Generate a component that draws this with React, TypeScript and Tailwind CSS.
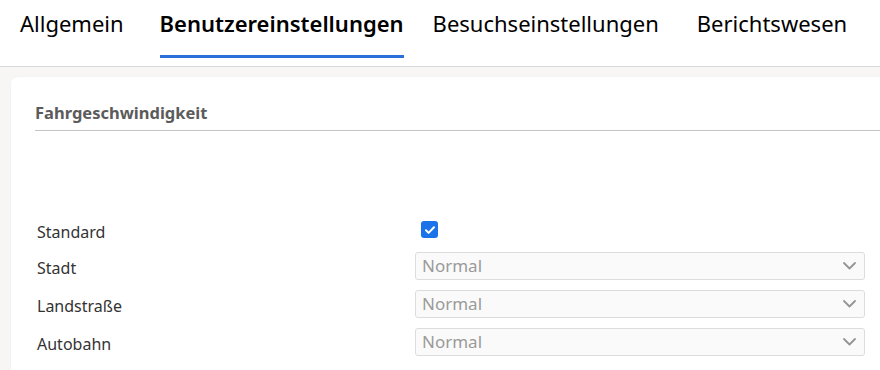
import React from "react";

const tabs = [
  { label: "Allgemein", cls: "" },
  { label: "Benutzereinstellungen", cls: "ml-[36px]" },
  { label: "Besuchseinstellungen", cls: "ml-[29px]" },
  { label: "Berichtswesen", cls: "ml-[38px]" },
];
const rows = ["Stadt", "Landstraße", "Autobahn"];

const Chevron = () => (
  <svg width="13" height="13" viewBox="0 0 13 13" fill="none" className="text-[#959595]">
    <path d="M1 4l5.5 5.5L12 4" stroke="currentColor" strokeWidth="1.8" strokeLinecap="round" strokeLinejoin="round" />
  </svg>
);

const App: React.FC = () => {
  return (
    <div className="w-[880px] h-[370px] overflow-hidden bg-[#f7f6f5] font-['Noto_Sans',sans-serif]">
      {/* Tabs */}
      <div className="h-[67px] bg-white border-b border-[#d9d9d9] flex pl-[20px]">
        {tabs.map((t, i) => (
          <div key={t.label} className={"flex flex-col " + t.cls}>
            <div
              className={
                "pt-[7px] h-[55px] text-[22px] text-black whitespace-nowrap " +
                (i === 1 ? "font-semibold" : "")
              }
            >
              {t.label}
            </div>
            <div className={"h-[3px] " + (i === 1 ? "bg-[#2a6fdb]" : "")} />
          </div>
        ))}
      </div>

      {/* Card */}
      <div className="ml-[11px] mt-[10px] bg-white rounded-tl-[6px] h-[300px] pl-[24px] shadow-[0_0_2px_rgba(0,0,0,0.05)]">
        <div className="pt-[24px] pb-[4px] border-b border-[#c4c4c4] text-[16.5px] font-bold text-[#5b5b5b]">
          Fahrgeschwindigkeit
        </div>

        <div className="mt-[89px] flex flex-col text-[16px] text-[#333]">
          <div className="flex items-center h-[24px]">
            <span className="w-[386px] pl-[2px]">Standard</span>
            <span className="w-[17px] h-[17px] rounded-[3px] bg-[#1a73e8] flex items-center justify-center -mt-[4px]">
              <svg width="12" height="12" viewBox="0 0 12 12">
                <path d="M2 6.3l2.6 2.6L10 3.3" stroke="white" strokeWidth="2" fill="none" strokeLinecap="round" strokeLinejoin="round" />
              </svg>
            </span>
          </div>
          {rows.map((r, i) => (
            <div key={r} className={"flex items-center " + (i === 0 ? "mt-[8px]" : "mt-[10px]")}>
              <span className="w-[380px] pl-[2px] pt-[4px]">{r}</span>
              <div className="w-[450px] h-[28px] border border-[#dcdcdc] rounded-[3px] bg-[#fafafa] flex items-center justify-between pl-[6px] pr-[8px] text-[17px] text-[#9a9a9a]">
                <span>Normal</span>
                <Chevron />
              </div>
            </div>
          ))}
        </div>
      </div>
    </div>
  );
};

export default App;
